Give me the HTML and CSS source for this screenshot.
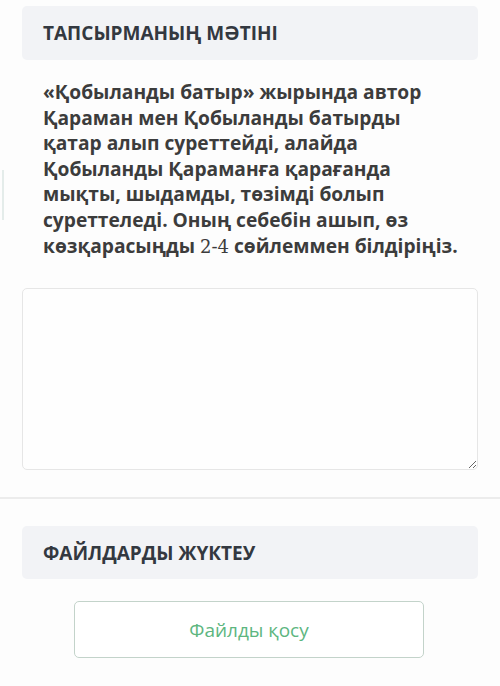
FILE: index.html
```html
<!DOCTYPE html>
<html lang="kk">
<head>
    <meta charset="UTF-8">
    <meta name="viewport" content="width=device-width, initial-scale=1.0">
    <title>Тапсырма</title>
    <link rel="stylesheet" href="styles.css">
</head>
<body>
    <div class="side-mark"></div>

    <section class="task">
        <div class="block-title">ТАПСЫРМАНЫҢ МӘТІНІ</div>
        <p class="task-text">«Қобыланды батыр» жырында автор Қараман мен Қобыланды батырды қатар алып суреттейді, алайда Қобыланды Қараманға қарағанда мықты, шыдамды, төзімді болып суреттеледі. Оның себебін ашып, өз көзқарасыңды <span class="math">2-4</span> сөйлеммен білдіріңіз.</p>
        <textarea class="answer"></textarea>
    </section>

    <hr class="divider">

    <!-- файлдар -->
    <section class="files">
        <div class="block-title">ФАЙЛДАРДЫ ЖҮКТЕУ</div>
        <div class="files-actions">
            <button class="add-file">Файлды қосу</button>
        </div>
    </section>
</body>
</html>
```

FILE: styles.css
```css
body {
    margin: 0;
    padding: 0;
    background: #fdfdfd;
    font-family: "Open Sans", "Noto Sans", sans-serif;
    color: #3b3b3b;
}

.side-mark {
    position: absolute;
    left: 2px;
    top: 170px;
    width: 2px;
    height: 50px;
    background: #e4ecea;
}

.task {
    padding: 6px 22px 0;
}

.block-title {
    background: #f2f3f6;
    border-radius: 5px;
    height: 54px;
    display: flex;
    align-items: center;
    padding: 0 21px;
    font-size: 19px;
    font-weight: 700;
    color: #333840;
}

.task-text {
    margin: 19px 0 0;
    padding: 0 14px 0 21px;
    font-size: 19.2px;
    font-weight: 700;
    line-height: 25.6px;
    color: #3c3c3c;
}

.task-text .math {
    font-family: "DejaVu Serif", "Liberation Serif", serif;
    font-weight: 400;
    font-size: 18px;
}

.answer {
    display: block;
    box-sizing: border-box;
    width: 100%;
    height: 182px;
    margin-top: 29px;
    border: 1px solid #e6e6e6;
    border-radius: 5px;
    background: #fefefe;
    resize: vertical;
}

.divider {
    margin: 27px 0 0;
    border: none;
    height: 2px;
    background: #ececec;
}

.files {
    padding: 27px 22px 0;
}

.files .block-title {
    height: 53px;
}

.files-actions {
    display: flex;
    justify-content: center;
    margin-top: 22px;
}

.add-file {
    width: 350px;
    height: 57px;
    margin-left: -2px;
    background: #fff;
    border: 1px solid #c3d3ca;
    border-radius: 5px;
    font-family: "Open Sans", "Noto Sans", sans-serif;
    font-size: 19px;
    color: #5db67f;
    cursor: pointer;
}
```
